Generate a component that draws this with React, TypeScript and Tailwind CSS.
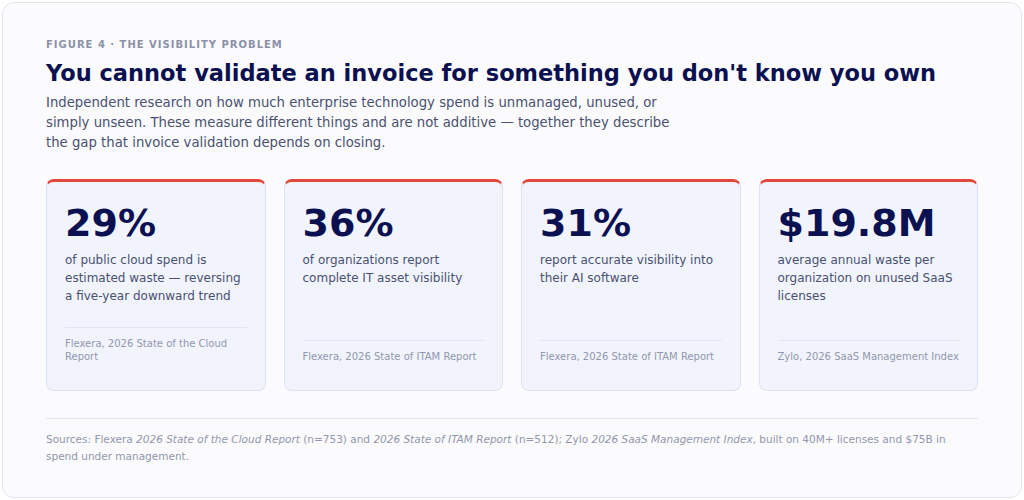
const stats = [
  {
    value: '29%',
    text: 'of public cloud spend is estimated waste — reversing a five-year downward trend',
    source: 'Flexera, 2026 State of the Cloud Report',
  },
  {
    value: '36%',
    text: 'of organizations report complete IT asset visibility',
    source: 'Flexera, 2026 State of ITAM Report',
  },
  {
    value: '31%',
    text: 'report accurate visibility into their AI software',
    source: 'Flexera, 2026 State of ITAM Report',
  },
  {
    value: '$19.8M',
    text: 'average annual waste per organization on unused SaaS licenses',
    source: 'Zylo, 2026 SaaS Management Index',
  },
]

function StatCard({ value, text, source }: (typeof stats)[number]) {
  return (
    <div className="flex h-[212px] flex-col rounded-lg border border-[#dde2f0] border-t-[3px] border-t-[#e2473b] bg-[#f1f4fd] px-[18px] pt-[18px] pb-[27px]">
      <div className="text-[38px] font-bold leading-[46px] text-[#0b1050]">{value}</div>
      <p className="mt-[5px] text-[12px] leading-[18px] text-[#4a5170]">{text}</p>
      <div className="mt-auto border-t border-[#e2e6f2] pt-[10px] text-[10px] leading-[12.5px] text-[#9297ad]">
        {source}
      </div>
    </div>
  )
}

export default function App() {
  return (
    <div className="h-[500px] w-[1024px] bg-white p-[2px] font-['DejaVu_Sans',sans-serif]">
      <div className="h-full rounded-xl border border-[#e3e6f1] bg-[#fbfbfd] px-[43px] pt-[35px]">
        <div className="text-[10px] font-bold uppercase leading-[14px] tracking-[0.1em] text-[#8c91a8]">
          Figure 4 · The visibility problem
        </div>
        <h1 className="mt-[7px] text-[22.5px] font-bold leading-[28px] text-[#0b1050]">
          You cannot validate an invoice for something you don't know you own
        </h1>
        <p className="mt-[6px] max-w-[630px] text-[13.25px] leading-[20px] text-[#4a5170]">
          Independent research on how much enterprise technology spend is unmanaged, unused, or simply
          unseen. These measure different things and are not additive — together they describe the gap
          that invoice validation depends on closing.
        </p>
        <div className="mt-[26px] grid grid-cols-4 gap-[18px]">
          {stats.map((s) => (
            <StatCard key={s.value} {...s} />
          ))}
        </div>
        <div className="mt-[27px] border-t border-[#e3e6f1] pt-[12px] text-[10.5px] leading-[17px] text-[#9297ad]">
          Sources: Flexera <i>2026 State of the Cloud Report</i> (n=753) and <i>2026 State of ITAM Report</i>{' '}
          (n=512); Zylo <i>2026 SaaS Management Index</i>, built on 40M+ licenses and $75B in spend under
          management.
        </div>
      </div>
    </div>
  )
}
